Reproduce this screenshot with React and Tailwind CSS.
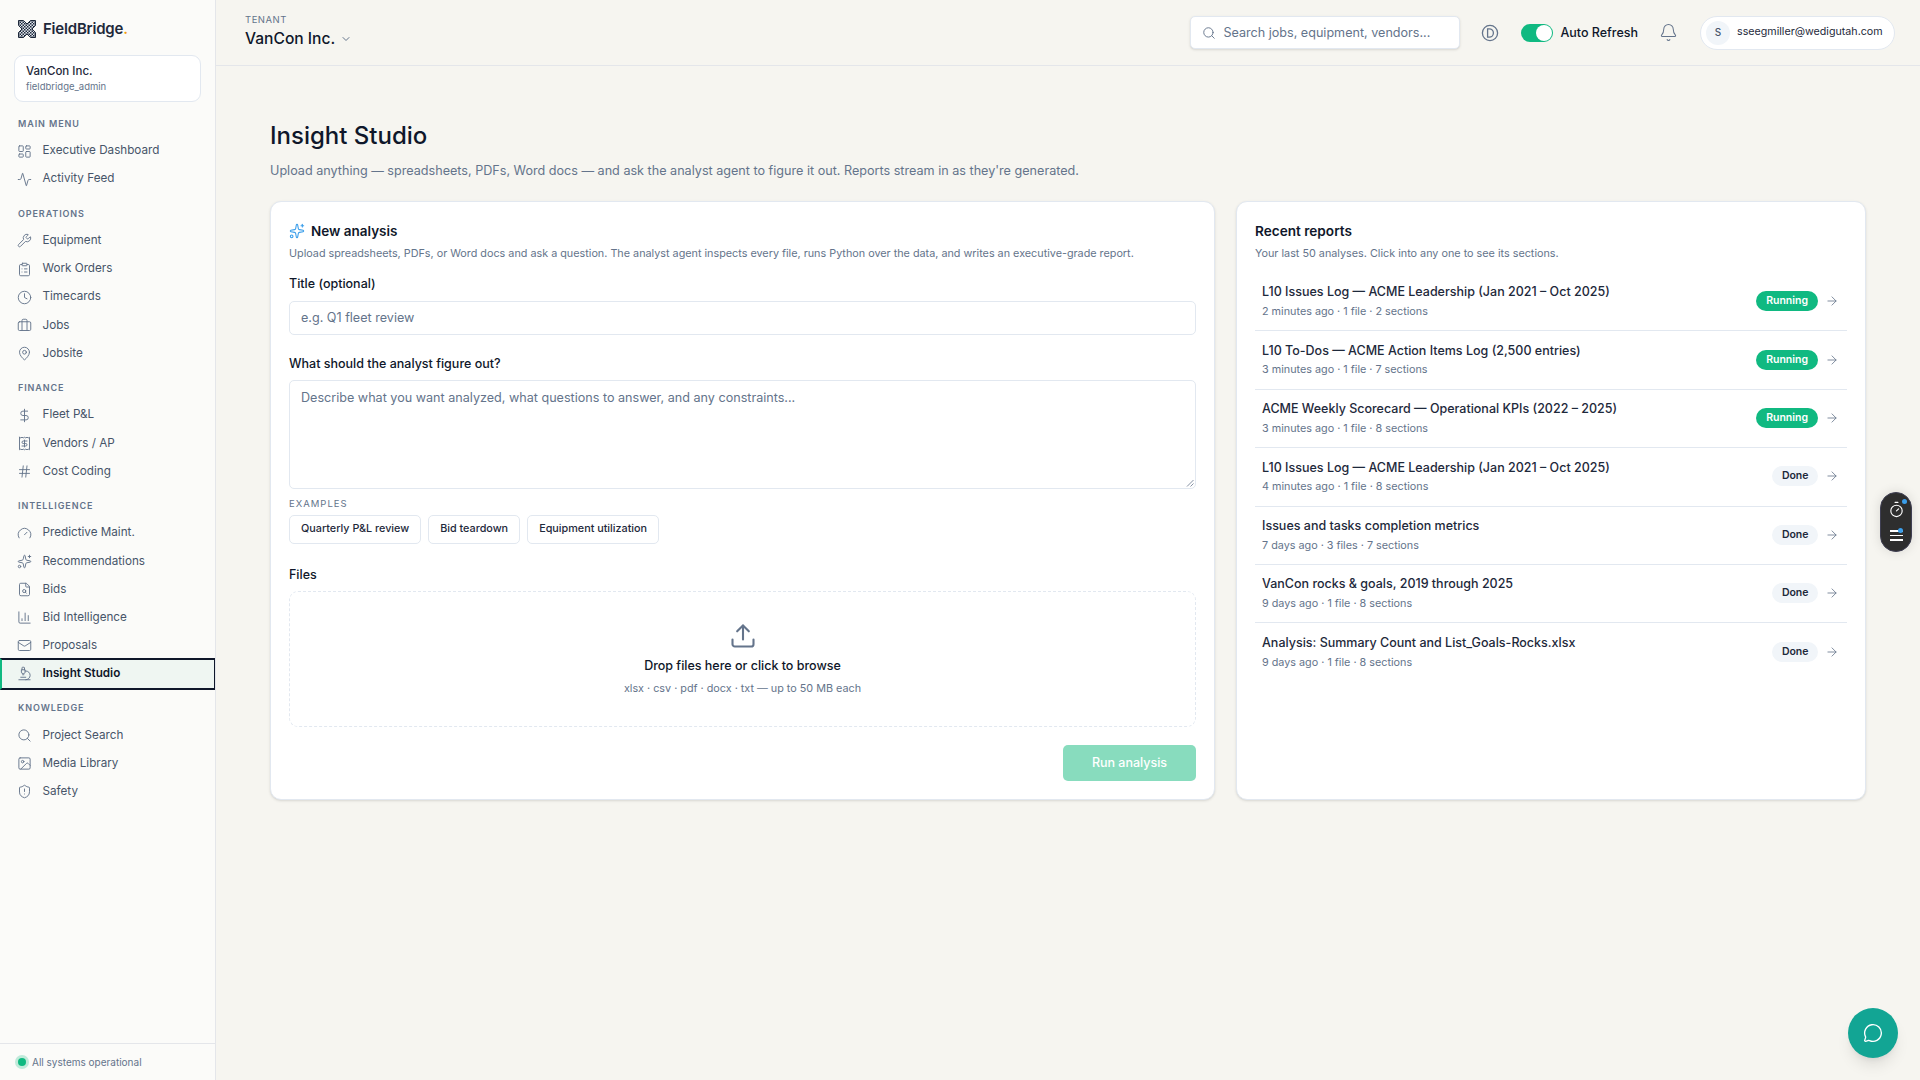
import React from "react";
import {
  LayoutDashboard, Activity, Wrench, ClipboardList, Clock, Briefcase, MapPin, DollarSign, Receipt, Hash,
  Gauge, Sparkles, FileSearch, ChartColumn, Mail, Microscope, Search, Image, ShieldAlert, ChevronDown,
  Bell, Upload, ArrowRight, MessageCircle, Timer,
} from "lucide-react";

const groups = [
  { label: "MAIN MENU", items: [["Executive Dashboard", LayoutDashboard], ["Activity Feed", Activity]] },
  { label: "OPERATIONS", items: [["Equipment", Wrench], ["Work Orders", ClipboardList], ["Timecards", Clock], ["Jobs", Briefcase], ["Jobsite", MapPin]] },
  { label: "FINANCE", items: [["Fleet P&L", DollarSign], ["Vendors / AP", Receipt], ["Cost Coding", Hash]] },
  { label: "INTELLIGENCE", items: [["Predictive Maint.", Gauge], ["Recommendations", Sparkles], ["Bids", FileSearch], ["Bid Intelligence", ChartColumn], ["Proposals", Mail], ["Insight Studio", Microscope, true]] },
  { label: "KNOWLEDGE", items: [["Project Search", Search], ["Media Library", Image], ["Safety", ShieldAlert]] },
];

const reports = [
  ["L10 Issues Log — ACME Leadership (Jan 2021 – Oct 2025)", "2 minutes ago · 1 file · 2 sections", true],
  ["L10 To-Dos — ACME Action Items Log (2,500 entries)", "3 minutes ago · 1 file · 7 sections", true],
  ["ACME Weekly Scorecard — Operational KPIs (2022 – 2025)", "3 minutes ago · 1 file · 8 sections", true],
  ["L10 Issues Log — ACME Leadership (Jan 2021 – Oct 2025)", "4 minutes ago · 1 file · 8 sections", false],
  ["Issues and tasks completion metrics", "7 days ago · 3 files · 7 sections", false],
  ["VanCon rocks & goals, 2019 through 2025", "9 days ago · 1 file · 8 sections", false],
  ["Analysis: Summary Count and List_Goals-Rocks.xlsx", "9 days ago · 1 file · 8 sections", false],
];

function Logo() {
  return (
    <svg width="18" height="18" viewBox="0 0 18 18" className="shrink-0">
      <defs>
        <pattern id="hatch" width="3" height="3" patternUnits="userSpaceOnUse">
          <rect width="3" height="3" fill="#e2e8f0" />
          <rect width="1.5" height="1.5" fill="#1e293b" />
          <rect x="1.5" y="1.5" width="1.5" height="1.5" fill="#1e293b" />
        </pattern>
      </defs>
      <path d="M0.5 0.5h5L9 4l3.5-3.5h5v5L14 9l3.5 3.5v5h-5L9 14l-3.5 3.5h-5v-5L4 9 0.5 5.5z" fill="url(#hatch)" stroke="#1e293b" strokeWidth="1" />
    </svg>
  );
}

function Sidebar() {
  return (
    <aside className="w-[216px] shrink-0 h-full flex flex-col bg-[#fbfbf9] border-r border-[#e4e6ea]">
      <div className="h-[55px] shrink-0 flex items-center gap-[7px] px-[18px] pt-[3px]">
        <Logo />
        <span className="text-[15px] font-semibold text-[#1e293b] tracking-[-0.2px]">FieldBridge<span className="text-[#f59e0b]">.</span></span>
      </div>
      <div className="mx-[14px] h-[47px] shrink-0 bg-white border border-[#e2e8f0] rounded-[9px] px-[11px] flex flex-col justify-center gap-[1px]">
        <div className="text-[11.5px] leading-[16px] font-medium text-[#1e293b]">VanCon Inc.</div>
        <div className="text-[9.5px] leading-[14px] text-[#64748b]">fieldbridge_admin</div>
      </div>
      <nav className="flex-1 flex flex-col gap-[10.6px] pt-[12px]">
        {groups.map((g) => (
          <div key={g.label}>
            <div className="h-[18px] mb-[5px] pt-[1px] px-[18px] flex items-center text-[9px] font-semibold tracking-[0.9px] text-[#64748b]">{g.label}</div>
            {g.items.map(([name, Icon, active]) => (
              <div
                key={name}
                className={active
                  ? "h-[32px] -my-[2px] relative flex items-center gap-[10.5px] pl-[15px] border-l-2 border-l-[#10b981] border-y-2 border-y-[#0f172a] border-r border-r-[#0f172a] bg-[#eff6f2] text-[#0f172a] font-semibold"
                  : "h-[28.15px] flex items-center gap-[10.5px] pl-[17px] text-[#475569]"}
              >
                <Icon size={15} strokeWidth={1.5} className="text-[#64748b] shrink-0" />
                <span className="text-[11.7px]">{name}</span>
              </div>
            ))}
          </div>
        ))}
      </nav>
      <div className="h-[37px] shrink-0 border-t border-[#e4e6ea] flex items-center gap-[6px] pl-[18px]">
        <span className="w-[8px] h-[8px] rounded-full bg-[#10b981] ring-[3px] ring-[#10b981]/25" />
        <span className="text-[10px] text-[#64748b]">All systems operational</span>
      </div>
    </aside>
  );
}

function Header() {
  return (
    <header className="h-[66px] shrink-0 border-b border-[#e4e6ea] flex items-center justify-between pl-[29px] pr-[25px]">
      <div className="flex flex-col">
        <span className="text-[9.5px] leading-[12px] tracking-[0.5px] text-[#64748b]">TENANT</span>
        <span className="flex items-center gap-[5px] text-[15.6px] leading-[24px] mt-[1px] font-medium text-[#0f172a]">
          VanCon Inc.
          <ChevronDown size={12} className="text-[#64748b]" />
        </span>
      </div>
      <div className="flex items-center">
        <div className="w-[270px] h-[33px] bg-white border border-[#e2e8f0] rounded-[5px] flex items-center gap-[7px] px-[11px] shadow-sm">
          <Search size={14} strokeWidth={1.6} className="text-[#64748b]" />
          <span className="text-[12.6px] text-[#64748b] pt-[1px]">Search jobs, equipment, vendors...</span>
        </div>
        <svg width="18" height="18" viewBox="0 0 18 18" fill="none" stroke="#64748b" strokeWidth="1.3" className="ml-[21px]">
          <circle cx="9" cy="9" r="7.6" />
          <path d="M6.6 4.8h1.6a4.2 4.2 0 0 1 0 8.4H6.6z" />
        </svg>
        <div className="ml-[22px] w-[32px] h-[18px] rounded-full bg-[#10b981] flex items-center justify-end pr-[1px]">
          <span className="w-[16px] h-[16px] rounded-full bg-white" />
        </div>
        <span className="ml-[7px] text-[12.5px] font-medium text-[#0f172a] pt-[1px]">Auto Refresh</span>
        <Bell size={19} strokeWidth={1.3} className="ml-[21px] text-[#64748b]" />
        <div className="ml-[22px] w-[195px] h-[34px] bg-white border border-[#e2e8f0] rounded-full flex items-center pl-[5px] gap-[7px]">
          <span className="w-[24px] h-[24px] rounded-full bg-[#f1f5f9] flex items-center justify-center text-[10px] font-medium text-[#475569]">S</span>
          <span className="text-[10.7px] text-[#1e293b] pb-[1px]">sseegmiller@wedigutah.com</span>
        </div>
      </div>
    </header>
  );
}

function Label({ children, className = "" }) {
  return <div className={"text-[12.5px] leading-[16px] font-medium text-[#0f172a] " + className}>{children}</div>;
}

function NewAnalysis() {
  return (
    <section className="bg-white border border-[#e2e8f0] rounded-[11px] shadow-sm px-[18px] pt-[20px] flex flex-col">
      <h2 className="flex items-center gap-[6px] text-[13.5px] leading-[18px] font-semibold text-[#0f172a]">
        <Sparkles size={16} strokeWidth={1.6} className="text-[#3b9eea]" />
        New analysis
      </h2>
      <p className="mt-[7px] text-[10.8px] leading-[14px] text-[#64748b]">Upload spreadsheets, PDFs, or Word docs and ask a question. The analyst agent inspects every file, runs Python over the data, and writes an executive-grade report.</p>
      <Label className="mt-[15px]">Title (optional)</Label>
      <div className="mt-[9px] h-[34px] shrink-0 border border-[#e2e8f0] rounded-[5px] px-[11px] flex items-center text-[12.6px] text-[#64748b] pt-[1px]">e.g. Q1 fleet review</div>
      <Label className="mt-[21px]">What should the analyst figure out?</Label>
      <div className="relative mt-[8px] h-[109px] shrink-0 border border-[#e2e8f0] rounded-[5px] px-[11px] pt-[8px] text-[12.6px] leading-[17px] text-[#64748b]">
        Describe what you want analyzed, what questions to answer, and any constraints...
        <svg width="8" height="8" viewBox="0 0 8 8" className="absolute right-[1px] bottom-[1px]" stroke="#64748b" strokeWidth="0.8">
          <path d="M7.5 1L1 7.5M7.5 4.5L4.5 7.5" />
        </svg>
      </div>
      <div className="mt-[9px] text-[9.5px] leading-[12px] tracking-[1px] text-[#64748b]">EXAMPLES</div>
      <div className="mt-[5px] flex gap-[7px]">
        {["Quarterly P&L review", "Bid teardown", "Equipment utilization"].map((c) => (
          <span key={c} className="h-[29px] px-[11px] flex items-center bg-white border border-[#e2e8f0] rounded-[5px] text-[10.8px] font-medium text-[#1e293b]">{c}</span>
        ))}
      </div>
      <Label className="mt-[23px]">Files</Label>
      <div className="mt-[8px] h-[136px] shrink-0 border border-dashed border-[#e2e8f0] rounded-[9px] flex flex-col items-center pt-[29.5px]">
        <Upload size={28} strokeWidth={1.8} className="text-[#64748b]" />
        <div className="mt-[7px] text-[12.5px] leading-[18px] font-medium text-[#0f172a]">Drop files here or click to browse</div>
        <div className="mt-[7px] text-[10.8px] leading-[14px] text-[#64748b]">xlsx · csv · pdf · docx · txt — up to 50 MB each</div>
      </div>
      <div className="mt-[18px] flex justify-end">
        <span className="w-[133px] h-[36px] rounded-[5px] bg-[#88dcbe] flex items-center justify-center text-[12.5px] font-medium text-white">Run analysis</span>
      </div>
    </section>
  );
}

function Recent() {
  return (
    <section className="bg-white border border-[#e2e8f0] rounded-[11px] shadow-sm px-[18px] pt-[20px] flex flex-col">
      <h2 className="text-[13.6px] leading-[18px] font-semibold text-[#0f172a]">Recent reports</h2>
      <p className="mt-[7px] text-[10.8px] leading-[14px] text-[#64748b]">Your last 50 analyses. Click into any one to see its sections.</p>
      <div className="mt-[12px] flex flex-col">
        {reports.map(([title, sub, running], i) => (
          <div key={i} className={"h-[58.4px] shrink-0 flex items-center justify-between pl-[7px] pr-[8px] pb-[1px] " + (i < reports.length - 1 ? "border-b border-[#e2e8f0]" : "")}>
            <div className="flex flex-col gap-[4.5px]">
              <span className="text-[12.5px] leading-[17px] font-medium text-[#1e293b]">{title}</span>
              <span className="text-[10.8px] leading-[14px] text-[#64748b]">{sub}</span>
            </div>
            <div className="flex items-center gap-[7px]">
              <span className={running
                ? "h-[20px] px-[10px] rounded-full bg-[#10b981] text-white text-[10.5px] font-semibold flex items-center"
                : "h-[20px] px-[9.5px] rounded-full bg-[#f1f5f9] text-[#1e293b] text-[10.5px] font-semibold flex items-center"}>
                {running ? "Running" : "Done"}
              </span>
              <ArrowRight size={14} strokeWidth={1.4} className="text-[#64748b]" />
            </div>
          </div>
        ))}
      </div>
    </section>
  );
}

export default function App() {
  return (
    <div className="relative w-full h-screen overflow-hidden flex bg-[#f6f5f0] font-['Inter',sans-serif]">
      <Sidebar />
      <main className="flex-1 min-w-0 h-full flex flex-col">
        <Header />
        <div className="flex-1 pl-[54px] pr-[54px] pt-[54px]">
          <h1 className="text-[24px] leading-[32px] font-medium text-[#0f172a]">Insight Studio</h1>
          <p className="mt-[9px] text-[12.62px] leading-[20px] text-[#64748b]">Upload anything — spreadsheets, PDFs, Word docs — and ask the analyst agent to figure it out. Reports stream in as they're generated.</p>
          <div className="mt-[20px] h-[599px] grid grid-cols-[945px_1fr] gap-[21px]">
            <NewAnalysis />
            <Recent />
          </div>
        </div>
      </main>

      <div className="absolute left-[1880px] top-[492px] w-[32px] h-[60px] rounded-full bg-[#2e2e2e] border border-[#3f3f52] shadow-[0_0_12px_rgba(0,0,0,0.12)] flex flex-col items-center justify-center gap-[12px] pb-[2px]">
        <span className="relative">
          <Timer size={17} strokeWidth={1.6} className="text-white" />
          <span className="absolute -top-[2px] -right-[2px] w-[5px] h-[5px] rounded-full bg-[#3b9eea]" />
        </span>
        <span className="relative flex flex-col gap-[3px]">
          <span className="w-[13px] h-[1.5px] bg-white" />
          <span className="w-[13px] h-[1.5px] bg-white" />
          <span className="w-[13px] h-[1.5px] bg-white" />
          <span className="absolute -top-[2px] right-0 w-[5px] h-[5px] rounded-full bg-[#3b9eea]" />
        </span>
      </div>

      <div className="absolute left-[1848px] top-[1008px] w-[50px] h-[50px] rounded-full bg-[#12a594] shadow-lg flex items-center justify-center">
        <MessageCircle size={20} strokeWidth={1.6} className="text-white" />
      </div>
    </div>
  );
}
